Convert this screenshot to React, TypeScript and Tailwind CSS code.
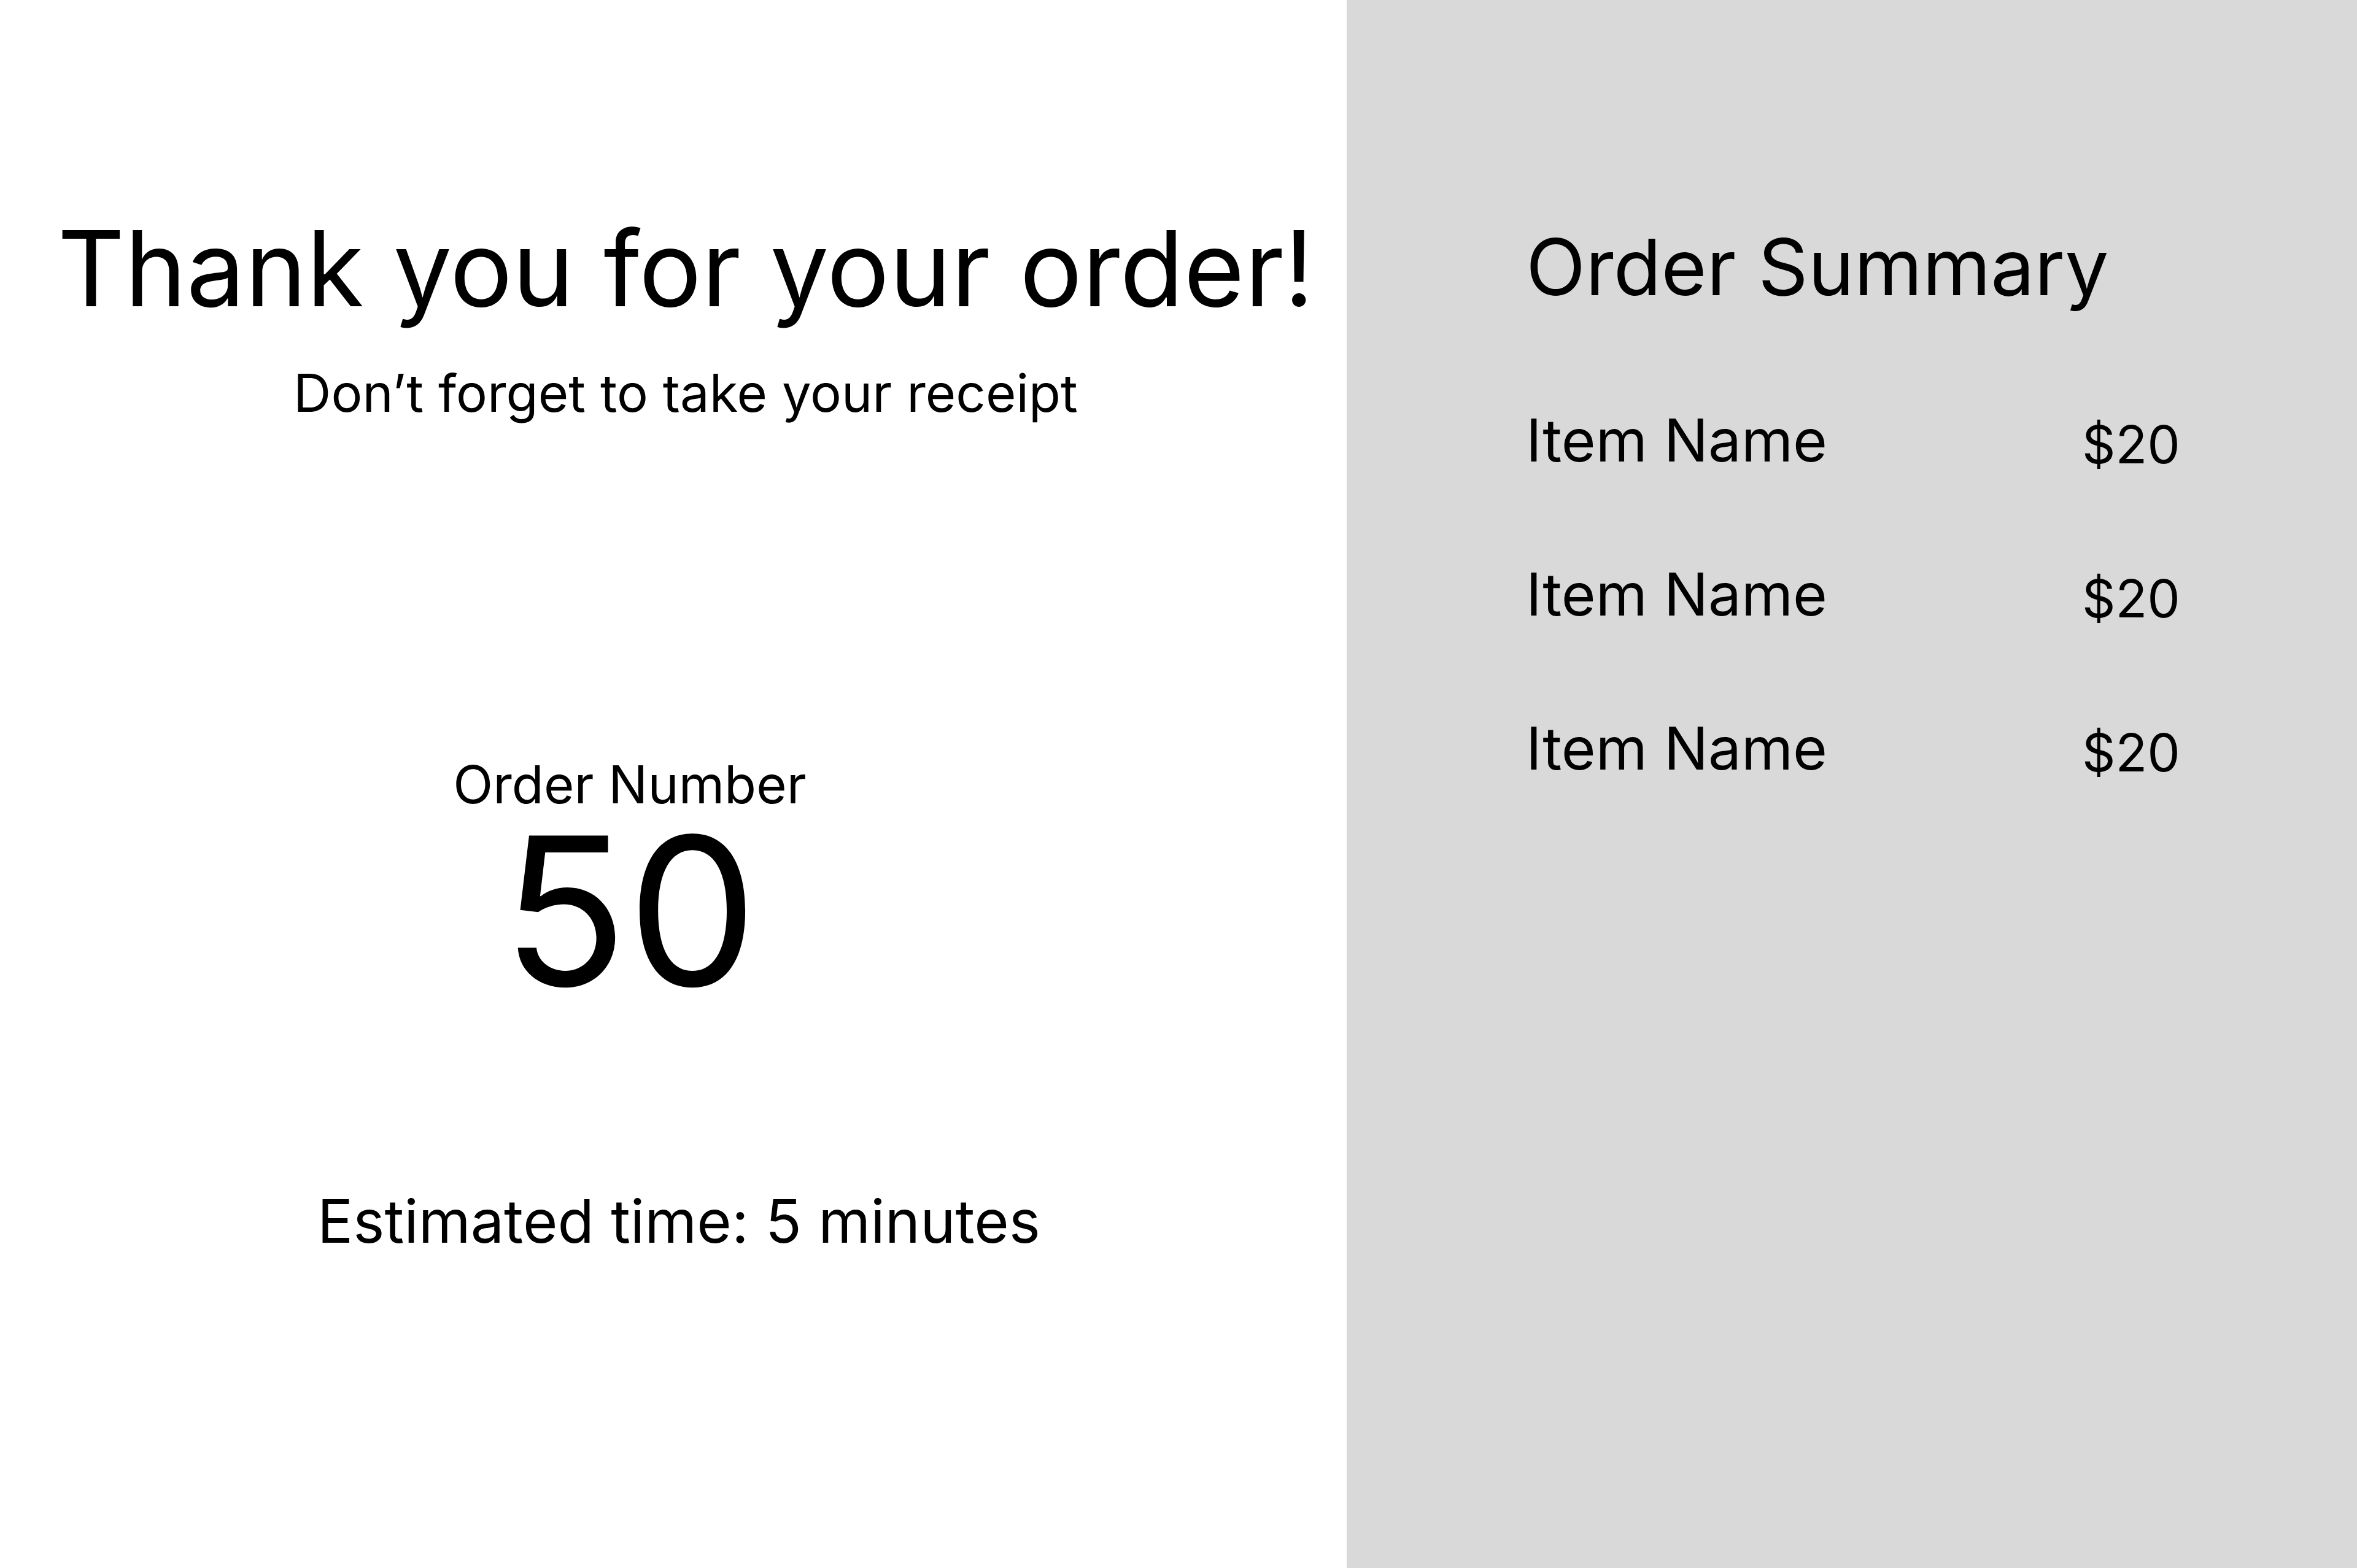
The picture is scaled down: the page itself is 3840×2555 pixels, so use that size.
export default function App() {
  return (
    <div className="flex w-[3840px] h-[2555px] bg-white text-black font-['Inter',sans-serif]">
      <div className="w-[2194px] flex flex-col items-center pt-[352px]">
        <h1 className="ml-[40px] text-[170px] leading-none font-normal">Thank you for your order!</h1>
        <p className="ml-[40px] mt-[76px] text-[85px] leading-none">Don’t forget to take your receipt</p>
        <div className="mt-[553px] mr-[142px] flex flex-col items-center">
          <div className="text-[85px] leading-none">Order Number</div>
          <div className="mt-[29px] text-[336px] leading-[0.8]">50</div>
        </div>
        <p className="ml-[18px] mt-[322px] text-[97px] leading-none">Estimated time: 5 minutes</p>
      </div>
      <div className="flex-1 bg-[#d9d9d9] pt-[372px] pl-[292px] pr-[288px]">
        <h2 className="text-[127px] leading-none">Order Summary</h2>
        <div className="mt-[170px] flex flex-col gap-[155px]">
          {[1, 2, 3].map((i) => (
            <div key={i} className="flex items-baseline justify-between leading-none">
              <span className="text-[96px]">Item Name</span>
              <span className="text-[85px] translate-y-[3px]">$20</span>
            </div>
          ))}
        </div>
      </div>
    </div>
  );
}
